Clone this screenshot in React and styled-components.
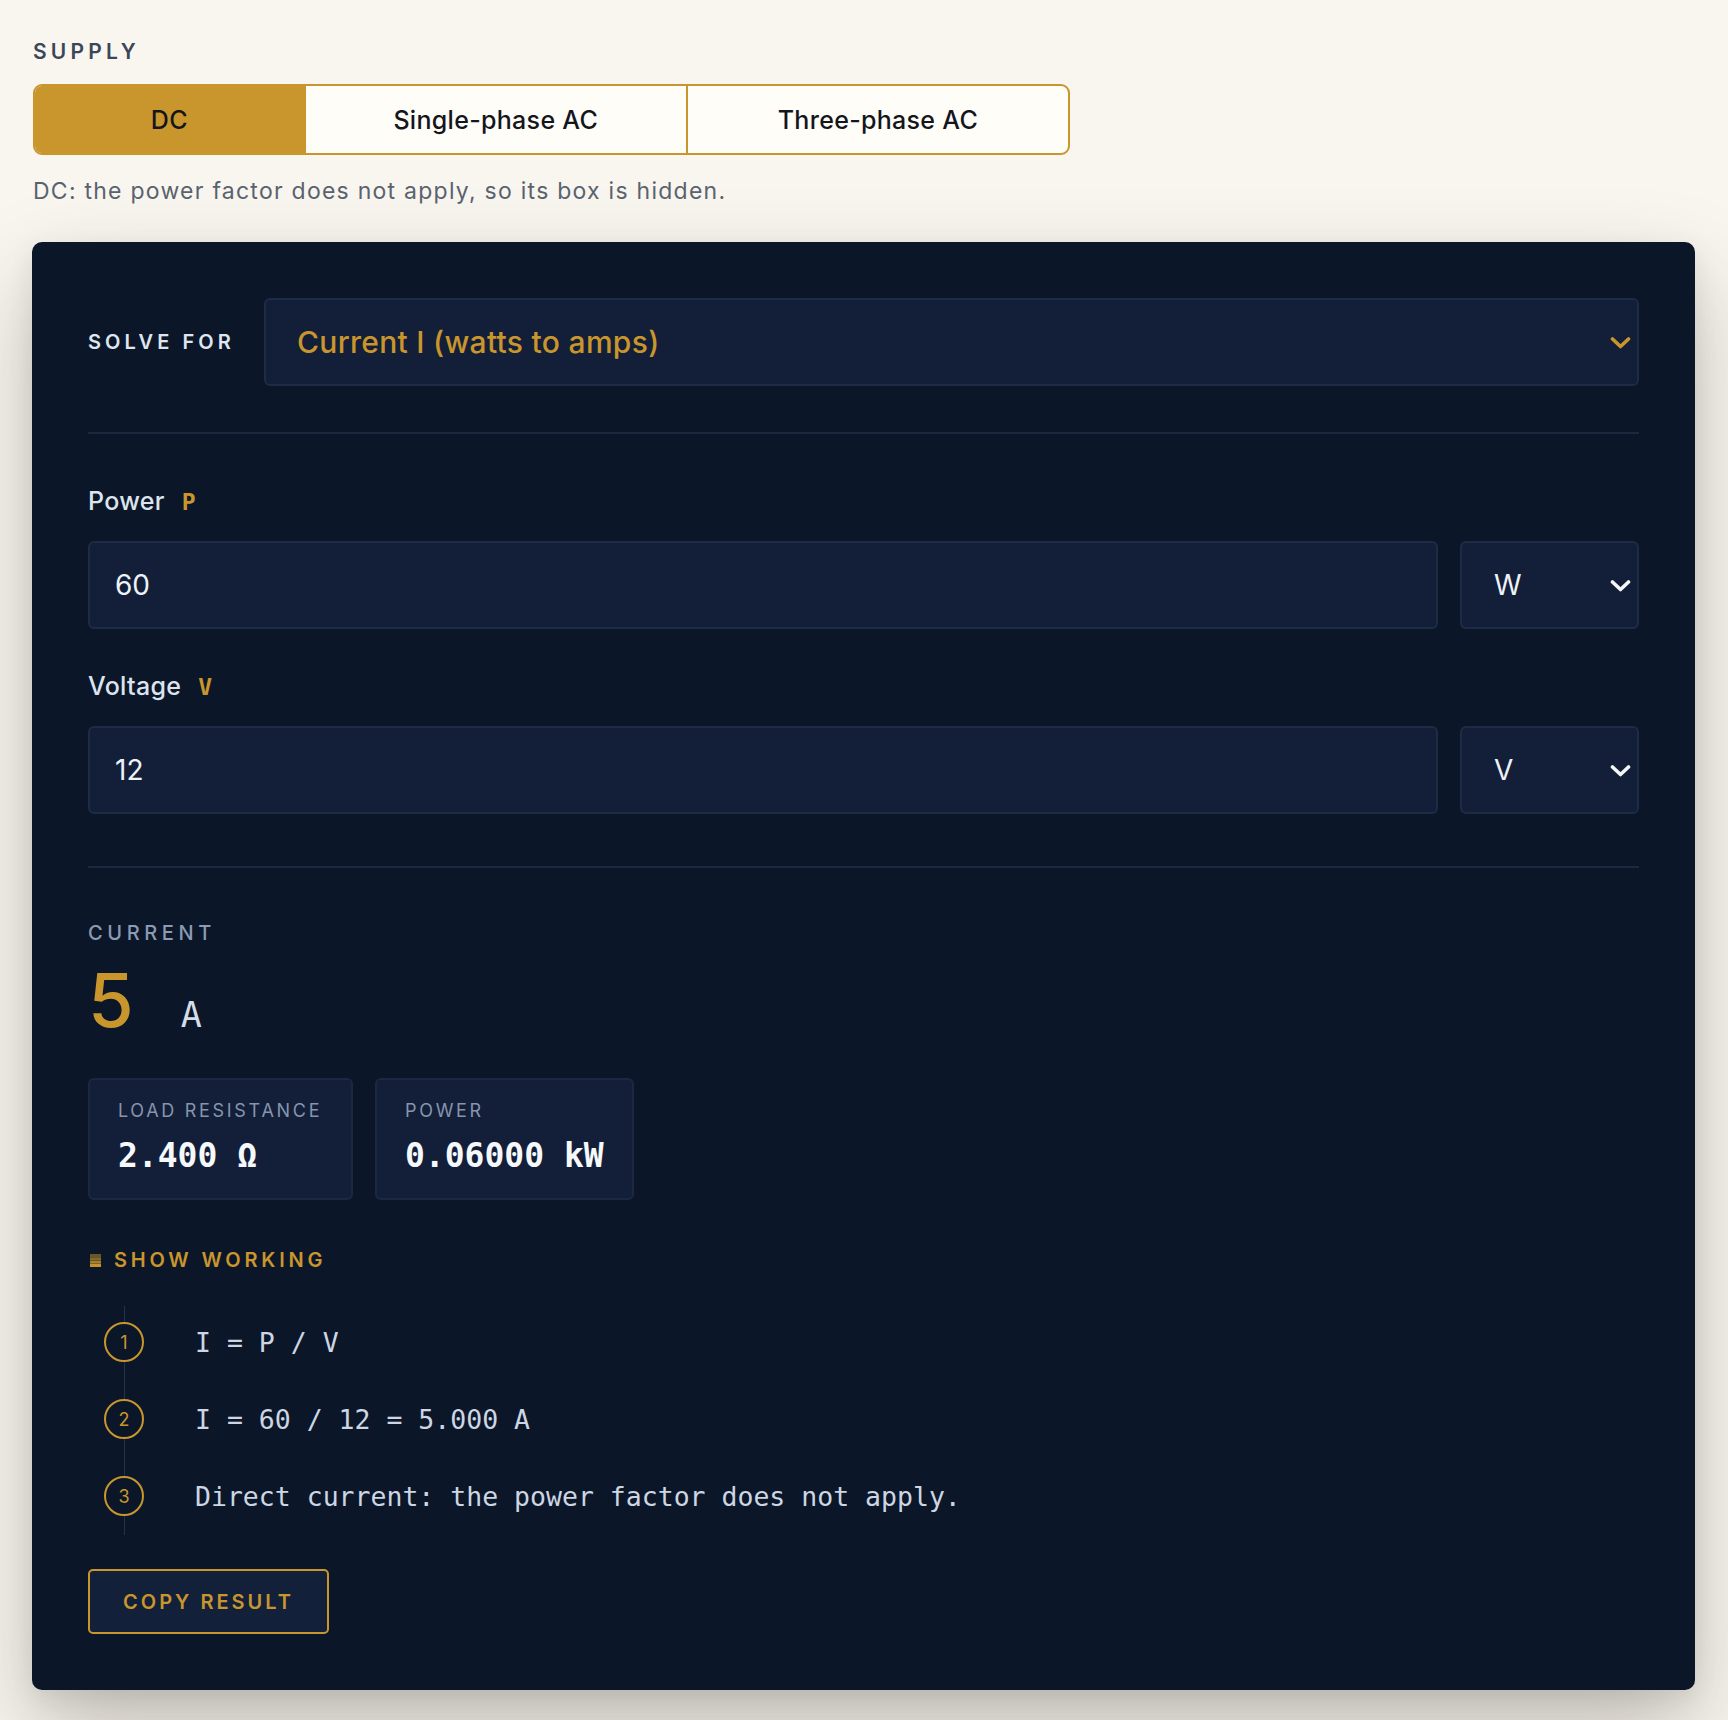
import React from "react";
import styled, { createGlobalStyle } from "styled-components";

const GlobalStyle = createGlobalStyle`
  * { box-sizing: border-box; }
  body {
    margin: 0;
    background: #f9f6ef;
    font-family: Inter, "Noto Sans", sans-serif;
  }
`;

const gold = "#c9952d";
const mono = `"DejaVu Sans Mono", "Liberation Mono", monospace`;

const Page = styled.div`
  padding: 39px 33px 31px 32px;
`;

const SectionLabel = styled.div`
  font-size: 21px;
  line-height: 25px;
  font-weight: 600;
  letter-spacing: 4.2px;
  color: #3b4758;
  margin-left: 1px;
`;

const Segmented = styled.div`
  display: grid;
  grid-template-columns: 0.703fr 1fr 1fr;
  width: 1037px;
  height: 71px;
  margin: 20px 0 0 1px;
  border: 2px solid ${gold};
  border-radius: 9px;
  overflow: hidden;
  background: #fffdf8;
`;

const Segment = styled.button`
  border: 0;
  border-left: ${(p) => (p.first ? "0" : `2px solid ${gold}`)};
  background: ${(p) => (p.active ? gold : "transparent")};
  font-family: inherit;
  font-size: 25px;
  font-weight: 500;
  letter-spacing: 0.3px;
  color: #14161b;
  cursor: pointer;
`;

const Hint = styled.p`
  margin: 22px 0 0 1px;
  font-size: 23px;
  line-height: 28px;
  letter-spacing: 1.25px;
  color: #59626f;
`;

const Card = styled.section`
  margin-top: 37px;
  background: #0b1729;
  border-radius: 10px;
  padding: 56px 56px 56px;
  box-shadow: 0 40px 90px rgba(40, 36, 28, 0.28), 0 8px 24px rgba(40, 36, 28, 0.08);
`;

const SolveRow = styled.div`
  display: flex;
  align-items: center;
  gap: 29px;
`;

const SolveLabel = styled.div`
  font-size: 20px;
  font-weight: 600;
  letter-spacing: 4.1px;
  color: #dfe6ef;
`;

const SelectBox = styled.div`
  flex: ${(p) => (p.grow ? 1 : "none")};
  width: ${(p) => (p.grow ? "auto" : "179px")};
  height: 88px;
  display: flex;
  align-items: center;
  justify-content: space-between;
  padding: 0 6px 0 ${(p) => (p.grow ? "31px" : "32px")};
  background: #131f38;
  border: 2px solid #1e2b44;
  border-radius: 6px;
  color: ${(p) => (p.accent ? gold : "#eef2f7")};
  font-size: ${(p) => (p.grow ? "30px" : "28px")};
  font-weight: ${(p) => (p.accent ? 500 : 400)};
  letter-spacing: ${(p) => (p.accent ? "0.3px" : "0")};
`;

const Divider = styled.hr`
  margin: ${(p) => p.space || "46px 0 0"};
  border: 0;
  height: 2px;
  background: #1b2940;
`;

const FieldLabel = styled.label`
  display: block;
  margin-top: ${(p) => p.top || "0"};
  font-size: 25px;
  line-height: 29px;
  font-weight: 500;
  letter-spacing: 0.3px;
  color: #dde4ee;
`;

const Symbol = styled.span`
  margin-left: 17px;
  font-family: ${mono};
  font-weight: 700;
  font-size: 23px;
  color: ${gold};
`;

const FieldRow = styled.div`
  display: flex;
  gap: 22px;
  margin-top: 24px;
`;

const NumberInput = styled.input`
  flex: 1;
  height: 88px;
  padding: 0 25px;
  background: #131f38;
  border: 2px solid #1e2b44;
  border-radius: 6px;
  color: #eef2f7;
  font-family: inherit;
  font-size: 28px;
  outline: none;
`;

const ResultLabel = styled.div`
  margin-top: 53px;
  font-size: 20px;
  line-height: 24px;
  font-weight: 500;
  letter-spacing: 4.6px;
  color: #8b9bb3;
`;

const BigValue = styled.div`
  display: flex;
  align-items: baseline;
  gap: 47px;
  margin-top: 18px;
  line-height: 1;
`;

const Number = styled.span`
  font-size: 74px;
  font-weight: 500;
  color: ${gold};
`;

const Unit = styled.span`
  font-family: ${mono};
  font-size: 35px;
  color: #d5dde8;
`;

const Stats = styled.div`
  display: flex;
  gap: 22px;
  margin-top: 41px;
`;

const Stat = styled.div`
  width: ${(p) => p.w}px;
  height: 122px;
  padding: 20px 0 0 28px;
  background: #131f38;
  border: 2px solid #1b2842;
  border-radius: 6px;
  white-space: nowrap;
`;

const StatLabel = styled.div`
  font-size: 18px;
  line-height: 22px;
  letter-spacing: 2.7px;
  color: #8595ae;
`;

const StatValue = styled.div`
  margin-top: 14px;
  font-family: ${mono};
  font-size: 33px;
  line-height: 40px;
  font-weight: 700;
  color: #f6f8fb;
`;

const Summary = styled.div`
  display: flex;
  align-items: center;
  gap: 13px;
  margin-top: 48px;
  padding-left: 2px;
  font-size: 20px;
  line-height: 24px;
  font-weight: 600;
  letter-spacing: 3.8px;
  color: ${gold};
`;

const Steps = styled.ol`
  position: relative;
  list-style: none;
  margin: 34px 0 0;
  padding: 16px 0 19px 16px;
  display: flex;
  flex-direction: column;
  gap: 37px;

  &::before {
    content: "";
    position: absolute;
    left: 36px;
    top: 0;
    bottom: 0;
    width: 1px;
    background: #24334c;
  }
`;

const Step = styled.li`
  display: flex;
  align-items: center;
  gap: 51px;
`;

const StepNum = styled.span`
  position: relative;
  width: 40px;
  height: 40px;
  flex: none;
  display: grid;
  place-items: center;
  border: 2px solid ${gold};
  border-radius: 50%;
  background: #0b1729;
  color: ${gold};
  font-size: 18px;
`;

const StepText = styled.span`
  font-family: ${mono};
  font-size: 26.5px;
  color: #cdd6e2;
`;

const CopyButton = styled.button`
  display: block;
  margin-top: 34px;
  width: 241px;
  height: 65px;
  background: #13203a;
  border: 2px solid ${gold};
  border-radius: 5px;
  color: ${gold};
  font-family: inherit;
  font-size: 20px;
  font-weight: 600;
  letter-spacing: 3px;
  cursor: pointer;
`;

const Chevron = ({ color }) => (
  <svg width="21" height="13" viewBox="0 0 21 13">
    <path d="M2.5 3l8 7.5 8-7.5" fill="none" stroke={color} strokeWidth="3.6" strokeLinecap="round" strokeLinejoin="round" />
  </svg>
);

// little striped marker in front of the disclosure title
const Stripes = () => (
  <svg width="11" height="13" viewBox="0 0 11 13">
    {[0, 3.3, 6.6, 9.9].map((y, i) => (
      <rect key={y} x="0" y={y} width="11" height="3.1" fill={gold} opacity={0.5 + i * 0.16} />
    ))}
  </svg>
);

const supplies = ["DC", "Single-phase AC", "Three-phase AC"];

const steps = [
  "I = P / V",
  "I = 60 / 12 = 5.000 A",
  "Direct current: the power factor does not apply.",
];

export default function App() {
  return (
    <Page>
      <GlobalStyle />
      <SectionLabel>SUPPLY</SectionLabel>
      <Segmented>
        {supplies.map((s, i) => (
          <Segment key={s} first={i === 0} active={i === 0}>
            {s}
          </Segment>
        ))}
      </Segmented>
      <Hint>DC: the power factor does not apply, so its box is hidden.</Hint>

      <Card>
        <SolveRow>
          <SolveLabel>SOLVE FOR</SolveLabel>
          <SelectBox grow accent>
            Current I (watts to amps)
            <Chevron color={gold} />
          </SelectBox>
        </SolveRow>

        <Divider />

        <FieldLabel top="53px">
          Power<Symbol>P</Symbol>
        </FieldLabel>
        <FieldRow>
          <NumberInput defaultValue="60" />
          <SelectBox>
            W
            <Chevron color="#f4f6f9" />
          </SelectBox>
        </FieldRow>

        <FieldLabel top="43px">
          Voltage<Symbol>V</Symbol>
        </FieldLabel>
        <FieldRow>
          <NumberInput defaultValue="12" />
          <SelectBox>
            V
            <Chevron color="#f4f6f9" />
          </SelectBox>
        </FieldRow>

        <Divider space="52px 0 0" />

        <ResultLabel>CURRENT</ResultLabel>
        <BigValue>
          <Number>5</Number>
          <Unit>A</Unit>
        </BigValue>

        <Stats>
          <Stat w={265}>
            <StatLabel>LOAD RESISTANCE</StatLabel>
            <StatValue>2.400 Ω</StatValue>
          </Stat>
          <Stat w={259}>
            <StatLabel>POWER</StatLabel>
            <StatValue>0.06000 kW</StatValue>
          </Stat>
        </Stats>

        <Summary>
          <Stripes />
          SHOW WORKING
        </Summary>

        <Steps>
          {steps.map((s, i) => (
            <Step key={s}>
              <StepNum>{i + 1}</StepNum>
              <StepText>{s}</StepText>
            </Step>
          ))}
        </Steps>

        <CopyButton>COPY RESULT</CopyButton>
      </Card>
    </Page>
  );
}
